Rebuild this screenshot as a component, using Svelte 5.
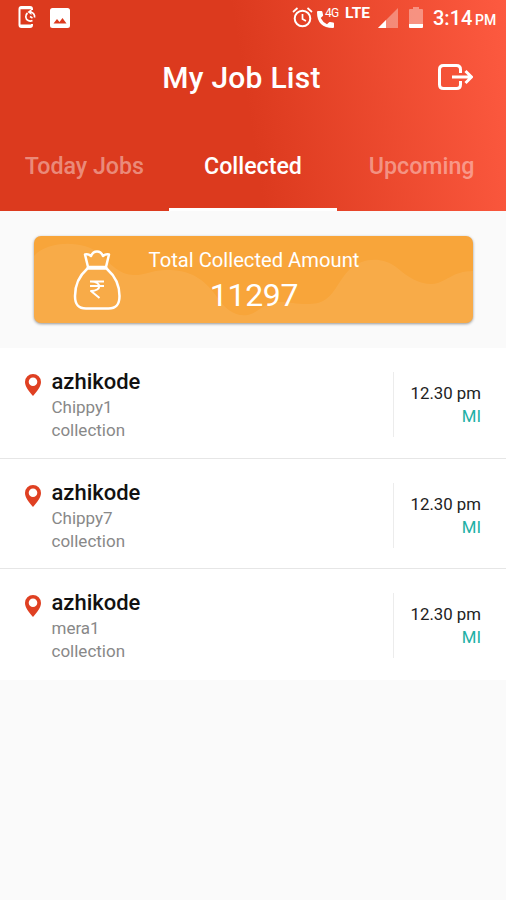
<script>
	const tabs = ['Today Jobs', 'Collected', 'Upcoming'];
	let active = $state('Collected');

	const jobs = [
		{ place: 'azhikode', name: 'Chippy1', type: 'collection', time: '12.30 pm', tag: 'MI' },
		{ place: 'azhikode', name: 'Chippy7', type: 'collection', time: '12.30 pm', tag: 'MI' },
		{ place: 'azhikode', name: 'mera1', type: 'collection', time: '12.30 pm', tag: 'MI' }
	];
</script>

<div class="screen">
	<header>
		<div class="status">
			<svg class="phone" width="20" height="24" viewBox="0 0 20 24" fill="none" stroke="#fff" stroke-width="2">
				<path d="M15 5V4q0-2-2-2H4.500Q2.500 2 2.500 4v16q0 2 2 2H13q2 0 2-2v-1" />
				<path d="M3 3h11.500M3 20.700h11.500" stroke-width="2.600" />
				<path d="M10.500 8c-2.500 2-2.300 6 .7 7.600 1.500.8 3 .6 4.300 0M13.500 7c3 .5 4.500 3 4 5.500" stroke-width="1.700" />
				<path d="M10.500 7l4-3v6z" fill="#fff" stroke="none" />
				<path d="M13 11.500l2.500 1.500" stroke-width="1.500" />
			</svg>
			<svg class="image" width="20" height="20" viewBox="0 0 20 20">
				<path fill="#fff" fill-rule="evenodd" d="M2.500 0h15Q20 0 20 2.500v15q0 2.500-2.500 2.500h-15Q0 20 0 17.500v-15Q0 0 2.500 0zM3.500 15.500h13L12.500 10l-3 4-2.500-3z" />
			</svg>
			<div class="spacer"></div>
			<svg class="alarm" width="21" height="21" viewBox="0 0 21 21" fill="none" stroke="#fff" stroke-width="2">
				<circle cx="10.500" cy="11.500" r="7.800" />
				<path d="M1 5l4.500-4M20 5l-4.500-4M10.500 7v5l3.500 2" stroke-width="1.700" />
			</svg>
			<div class="call">
				<svg width="18" height="18" viewBox="0 0 18 18">
					<path fill="#fff" d="M1 1h3.500q.7 0 .9.900l.7 3q.1.600-.3 1L3.700 8q2.100 4.200 6.300 6.300l2.100-2.100q.4-.4 1-.3l3 .7q.9.200.9.900V17q0 1-1 1Q0 18 0 2q0-1 1-1z" />
				</svg>
				<span>4G</span>
			</div>
			<span class="lte">LTE</span>
			<svg class="signal" width="20" height="20" viewBox="0 0 20 20">
				<path fill="#fff" opacity=".35" d="M20 0v20H0z" />
				<path fill="#fff" d="M8 12v8H0z" />
			</svg>
			<svg class="battery" width="14" height="21" viewBox="0 0 14 21">
				<path fill="#fff" opacity=".38" d="M4 0h6v2h3q1 0 1 1v14H0V3q0-1 1-1h3z" />
				<path fill="#fff" d="M0 17h14v3q0 1-1 1H1q-1 0-1-1z" />
			</svg>
			<span class="clock">3:14</span>
			<span class="pm">PM</span>
		</div>

		<div class="title">
			<h1>My Job List</h1>
			<button aria-label="Log out">
				<svg width="36" height="28" viewBox="0 0 36 28" fill="none" stroke="#fff" stroke-width="3" stroke-linejoin="round">
					<path d="M23.500 10V6.500q0-4-4-4H6.500q-4 0-4 4v15q0 4 4 4h13q4 0 4-4V18" />
					<path d="M15 14h19M28.500 8l6 6-6 6" />
				</svg>
			</button>
		</div>

		<nav>
			{#each tabs as tab}
				<button class:active={tab === active} onclick={() => (active = tab)}><span>{tab}</span></button>
			{/each}
		</nav>
	</header>

	<section class="total">
		<svg class="waves" viewBox="0 0 439 87" preserveAspectRatio="none">
			<path fill="#fff" opacity=".075" d="M0 20C14 4 50 4 66 18c10 10 20 21 34 21 13 0 20-6 36-5 24 0 38 14 47 27 8 12 18 20 31 18 12-3 16-13 30-13 16 0 24 4 40 1 16-4 20-23 32-34 14-12 32-12 46-2 12 10 22 17 36 17 14-1 20-13 41-13v52H0z" />
		</svg>
		<svg class="bag" width="48" height="60" viewBox="0 0 48 60" fill="none" stroke="#fff" stroke-width="2.500" stroke-linejoin="round" stroke-linecap="round">
			<path d="M15 17L12 4.500q3-1 6 1.500 2-4.500 6-4.500T30 6q3-2.500 6-1.500L33 17z" />
			<path d="M14 18.500h20M14 19C6 26 2 36 2 46c0 9 3.500 12.500 11 12.500h22.500C43 58.500 46.500 55 46.500 46c0-10-4.500-20-12.500-27" />
			<path d="M17 31.500h14M17 36h14M18 31.500c11 0 11 9.500 0 9.500l8.500 7" stroke-width="2" stroke-linecap="butt" />
		</svg>
		<div class="sum">
			<span class="label">Total Collected Amount</span>
			<span class="amount">11297</span>
		</div>
	</section>

	<ul>
		{#each jobs as job}
			<li>
				<svg class="pin" width="16" height="22" viewBox="0 0 16 22">
					<path fill="#df4022" fill-rule="evenodd" d="M8 0a8 8 0 0 1 8 8c0 5-4 9-8 14C4 17 0 13 0 8a8 8 0 0 1 8-8zm0 3.500a4.300 4.300 0 1 0 0 8.600 4.300 4.300 0 0 0 0-8.600z" />
				</svg>
				<div class="info">
					<h2>{job.place}</h2>
					<p>{job.name}</p>
					<p>{job.type}</p>
				</div>
				<div class="when">
					<span class="time">{job.time}</span>
					<span class="tag">{job.tag}</span>
				</div>
			</li>
		{/each}
	</ul>
</div>

<style>
	:global(body) {
		margin: 0;
	}

	.screen {
		height: 900px;
		overflow: hidden;
		background: #fafafa;
		font-family: Roboto, sans-serif;
	}

	header {
		display: flex;
		flex-direction: column;
		height: 211px;
		color: #fff;
		background: linear-gradient(81deg, #dc3a1e 0%, #dc3a1e 49%, #fd5a40 100%);
	}

	button {
		padding: 0;
		border: none;
		background: none;
		font-family: inherit;
		color: inherit;
	}

	.status {
		display: flex;
		align-items: flex-start;
		height: 36px;
		padding: 0 10px 0 17px;
	}

	.phone { margin-top: 5px; }
	.image { margin: 8px 0 0 13px; }
	.spacer { flex: 1; }
	.alarm { margin-top: 7px; }

	.call {
		position: relative;
		margin: 10px 0 0 4px;
		width: 25px;
	}

	.call span {
		position: absolute;
		left: 8px;
		top: -3px;
		font-size: 12px;
		line-height: 12px;
		letter-spacing: -.8px;
	}

	.lte {
		margin: 5px 0 0 3px;
		width: 28px;
		font-size: 15.500px;
		line-height: 16px;
		font-weight: 700;
	}

	.signal { margin: 8px 0 0 5px; }
	.battery { margin: 7px 0 0 11px; }

	.clock {
		margin: 6px 0 0 10px;
		width: 39px;
		font-size: 20px;
		line-height: 24px;
		font-weight: 500;
		white-space: nowrap;
	}

	.pm {
		margin: 11px 0 0 3px;
		width: 21px;
		font-size: 14px;
		line-height: 18px;
		font-weight: 500;
	}

	.title {
		display: grid;
		grid-template-columns: 48px 1fr 48px;
		align-items: center;
		height: 84px;
		padding: 0 27px 0 6px;
	}

	h1 {
		grid-column: 2;
		margin: 0 0 0 -2px;
		font-size: 30px;
		line-height: 36px;
		font-weight: 500;
		letter-spacing: .25px;
		text-align: center;
	}

	.title button {
		height: 28px;
		margin-top: -3px;
	}

	nav {
		display: grid;
		grid-template-columns: repeat(3, 1fr);
		height: 91px;
	}

	nav button {
		padding-top: 4px;
		font-size: 23.200px;
		font-weight: 500;
		color: rgba(255, 255, 255, .42);
		border-bottom: 3px solid transparent;
	}

	nav .active {
		color: #fff;
		border-color: #fff;
	}

	.total {
		position: relative;
		display: flex;
		height: 87px;
		margin: 25px 33px 0 34px;
		border-radius: 7px;
		overflow: hidden;
		background: #f8a53a;
		color: #fff;
		box-shadow: 0 1px 3px rgba(0, 0, 0, .4);
	}

	.waves {
		position: absolute;
		inset: 0;
		width: 100%;
		height: 100%;
	}

	.bag {
		margin: 14px 0 0 39px;
		position: relative;
	}

	.sum {
		position: relative;
		display: flex;
		flex-direction: column;
		align-items: center;
		width: 212px;
		margin-left: 27px;
		white-space: nowrap;
	}

	.label {
		margin-top: 11px;
		font-size: 20.200px;
		line-height: 26px;
	}

	.amount {
		font-size: 32px;
		line-height: 44px;
		letter-spacing: -.3px;
	}

	ul {
		margin: 25px 0 0;
		padding: 0;
		list-style: none;
		background: #fff;
	}

	li {
		display: flex;
		box-sizing: border-box;
		height: 110.670px;
		padding: 0 25px;
		border-bottom: 1px solid #e6e6e6;
	}

	li:last-child {
		border-bottom-color: transparent;
	}

	.pin { margin-top: 26px; }

	.info {
		flex: 1;
		margin: 20px 0 0 10.500px;
	}

	h2 {
		margin: 0;
		font-size: 22px;
		line-height: 28px;
		font-weight: 500;
		color: #111;
	}

	p {
		margin: 0;
		font-size: 17px;
		line-height: 23px;
		color: #888;
	}

	.when {
		display: flex;
		flex-direction: column;
		align-items: flex-end;
		box-sizing: border-box;
		width: 88px;
		height: 65px;
		margin-top: 24px;
		padding-top: 10px;
		border-left: 1px solid #ececec;
		font-size: 16.800px;
		line-height: 23px;
		white-space: nowrap;
	}

	.time { color: #222; }
	.tag { color: #21b0a5; }
</style>
